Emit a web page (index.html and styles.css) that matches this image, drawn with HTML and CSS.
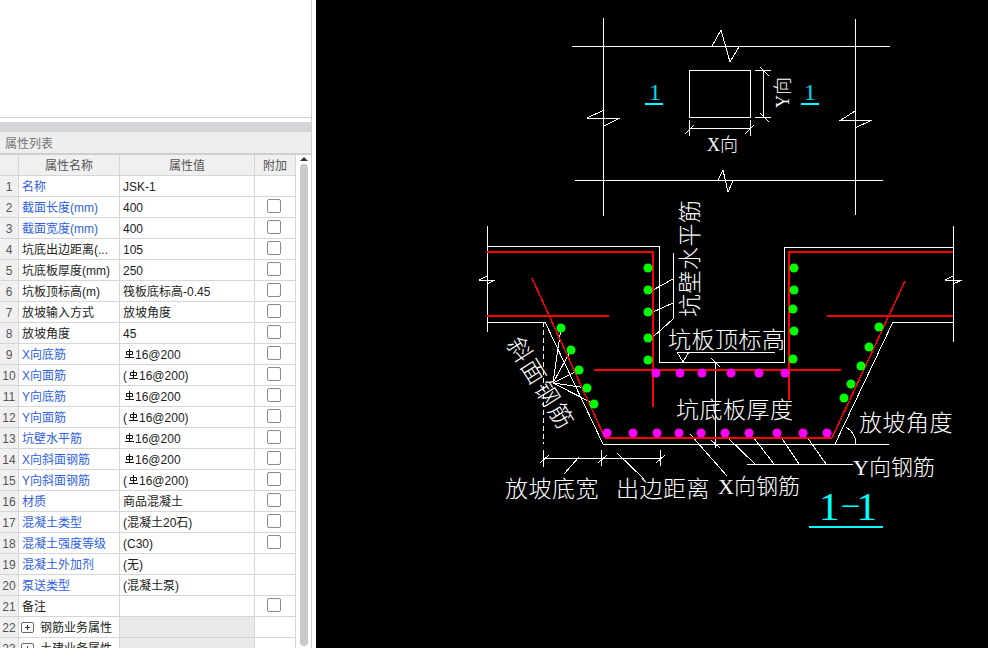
FILE: index.html
```html
<!DOCTYPE html>
<html lang="zh-CN">
<head>
<meta charset="utf-8">
<title>属性列表</title>
<link rel="stylesheet" href="styles.css">
</head>
<body>
<svg class="defs" width="0" height="0" aria-hidden="true"><symbol id="rebar" viewBox="0 0 9 10"><path d="M4.5 0V8.5M1.5 2.5H7.5V5.5H1.5ZM0 8.5H9"/></symbol></svg>
<div class="app">
  <aside class="side">
    <div class="top-pane"></div>
    <div class="band"></div>
    <div class="title">属性列表</div>
    <div class="grid-wrap">
      <table class="props">
        <colgroup><col class="c-no"><col class="c-name"><col class="c-val"><col class="c-add"></colgroup>
        <thead><tr><th></th><th>属性名称</th><th>属性值</th><th>附加</th></tr></thead>
        <tbody>
          <tr><td class="no">1</td><td class="nm blue">名称</td><td>JSK-1</td><td class="add"></td></tr>
          <tr><td class="no">2</td><td class="nm blue">截面长度(mm)</td><td>400</td><td class="add"><span class="cb"></span></td></tr>
          <tr><td class="no">3</td><td class="nm blue">截面宽度(mm)</td><td>400</td><td class="add"><span class="cb"></span></td></tr>
          <tr><td class="no">4</td><td class="nm">坑底出边距离(...</td><td>105</td><td class="add"><span class="cb"></span></td></tr>
          <tr><td class="no">5</td><td class="nm">坑底板厚度(mm)</td><td>250</td><td class="add"><span class="cb"></span></td></tr>
          <tr><td class="no">6</td><td class="nm">坑板顶标高(m)</td><td>筏板底标高-0.45</td><td class="add"><span class="cb"></span></td></tr>
          <tr><td class="no">7</td><td class="nm">放坡输入方式</td><td>放坡角度</td><td class="add"><span class="cb"></span></td></tr>
          <tr><td class="no">8</td><td class="nm">放坡角度</td><td>45</td><td class="add"><span class="cb"></span></td></tr>
          <tr><td class="no">9</td><td class="nm blue">X向底筋</td><td><svg class="rb"><use href="#rebar"/></svg>16@200</td><td class="add"><span class="cb"></span></td></tr>
          <tr><td class="no">10</td><td class="nm blue">X向面筋</td><td>(<svg class="rb"><use href="#rebar"/></svg>16@200)</td><td class="add"><span class="cb"></span></td></tr>
          <tr><td class="no">11</td><td class="nm blue">Y向底筋</td><td><svg class="rb"><use href="#rebar"/></svg>16@200</td><td class="add"><span class="cb"></span></td></tr>
          <tr><td class="no">12</td><td class="nm blue">Y向面筋</td><td>(<svg class="rb"><use href="#rebar"/></svg>16@200)</td><td class="add"><span class="cb"></span></td></tr>
          <tr><td class="no">13</td><td class="nm blue">坑壁水平筋</td><td><svg class="rb"><use href="#rebar"/></svg>16@200</td><td class="add"><span class="cb"></span></td></tr>
          <tr><td class="no">14</td><td class="nm blue">X向斜面钢筋</td><td><svg class="rb"><use href="#rebar"/></svg>16@200</td><td class="add"><span class="cb"></span></td></tr>
          <tr><td class="no">15</td><td class="nm blue">Y向斜面钢筋</td><td>(<svg class="rb"><use href="#rebar"/></svg>16@200)</td><td class="add"><span class="cb"></span></td></tr>
          <tr><td class="no">16</td><td class="nm blue">材质</td><td>商品混凝土</td><td class="add"><span class="cb"></span></td></tr>
          <tr><td class="no">17</td><td class="nm blue">混凝土类型</td><td>(混凝土20石)</td><td class="add"><span class="cb"></span></td></tr>
          <tr><td class="no">18</td><td class="nm blue">混凝土强度等级</td><td>(C30)</td><td class="add"><span class="cb"></span></td></tr>
          <tr><td class="no">19</td><td class="nm blue">混凝土外加剂</td><td>(无)</td><td class="add"></td></tr>
          <tr><td class="no">20</td><td class="nm blue">泵送类型</td><td>(混凝土泵)</td><td class="add"></td></tr>
          <tr><td class="no">21</td><td class="nm">备注</td><td></td><td class="add"><span class="cb"></span></td></tr>
          <tr class="group"><td class="no">22</td><td class="nm"><span class="plus"></span>钢筋业务属性</td><td class="shade"></td><td class="add"></td></tr>
          <tr class="group"><td class="no">23</td><td class="nm"><span class="plus"></span>土建业务属性</td><td class="shade"></td><td class="add"></td></tr>
        </tbody>
      </table>
      <div class="scroll"><span class="arrow"></span><span class="thumb"></span></div>
    </div>
  </aside>
  <main class="canvas">
    <svg class="drawing" viewBox="316 0 672 648" width="672" height="648">
      <g class="wh">
        <!-- plan view -->
        <path d="M603 18V216M855 19V215M572 46H890M575 180H883"/>
        <path d="M712 46L721 30L730 62L739 47M718 180L723 170L728 192L733 181"/>
        <path d="M604 110L587 118H620L604 126M855 111L841 120H872L855 128"/>
        <path d="M689 70H750V117H689Z"/>
        <path d="M763 70V117M755 70H771M755 117H771M760 67L769 76M760 113L769 122"/>
        <path d="M689 128H750M689 120V136M750 120V136M685 134L694 125M745 134L754 125"/>
        <!-- section outline -->
        <path d="M487 226V332M953 226V342"/>
        <path d="M487 246H659V362H784V247H953"/>
        <path d="M487 322H545L603 444H889M835 444L893 322H953"/>
        <path d="M487 276L479 280H495L487 284M953 276L945 280H962L953 284"/>
        <!-- leaders -->
        <path d="M673 253V319L653 337M673 279L653 290M673 303L653 312"/>
        <path d="M677 352H775M677 352H689L683 362Z"/>
        <path d="M715 362V448M711 358L720 367M711 440L720 448"/>
        <path d="M553 383L561 328M553 383L571 350M553 383L579 370M553 383L587 388M553 383L594 404"/>
        <path class="dash" d="M543 322V444"/>
        <path d="M543 458H660M543 450V467M601 450V466M660 450V466M540 463L549 455M598 463L607 455M656 463L665 455"/>
        <path d="M579 457L564 474M617 453L644 479M690 434L727 476"/>
        <path d="M747 464H853M727 437L755 464M753 437L774 464M781 437L799 464M807 437L826 464"/>
        <path d="M846 427A21 21 0 0 1 856 444"/>
      </g>
      <g class="rd">
        <path d="M487 252H653V407M487 316H609M789 400V252H953M827 316H953M594 370H841M605 438H832"/>
        <path class="thin" d="M532 278L605 438M832 438L905 281"/>
      </g>
      <g class="gr">
        <circle cx="648" cy="268" r="4.5"/><circle cx="648" cy="290" r="4.5"/><circle cx="648" cy="312" r="4.5"/><circle cx="648" cy="338" r="4.5"/><circle cx="648" cy="360" r="4.5"/>
        <circle cx="794" cy="268" r="4.5"/><circle cx="794" cy="290" r="4.5"/><circle cx="793" cy="309" r="4.5"/><circle cx="794" cy="331" r="4.5"/><circle cx="793" cy="359" r="4.5"/>
        <circle cx="561" cy="328" r="4.5"/><circle cx="571" cy="350" r="4.5"/><circle cx="579" cy="370" r="4.5"/><circle cx="587" cy="388" r="4.5"/><circle cx="594" cy="404" r="4.5"/>
        <circle cx="879" cy="327" r="4.5"/><circle cx="869" cy="347" r="4.5"/><circle cx="861" cy="366" r="4.5"/><circle cx="851" cy="384" r="4.5"/><circle cx="844" cy="398" r="4.5"/>
      </g>
      <g class="mg">
        <circle cx="656" cy="373" r="4.5"/><circle cx="680" cy="373" r="4.5"/><circle cx="702" cy="373" r="4.5"/><circle cx="731" cy="373" r="4.5"/><circle cx="759" cy="373" r="4.5"/><circle cx="785" cy="373" r="4.5"/>
        <circle cx="607" cy="433" r="4.5"/><circle cx="633" cy="433" r="4.5"/><circle cx="657" cy="433" r="4.5"/><circle cx="679" cy="433" r="4.5"/><circle cx="701" cy="433" r="4.5"/><circle cx="725" cy="433" r="4.5"/><circle cx="749" cy="433" r="4.5"/><circle cx="777" cy="433" r="4.5"/><circle cx="803" cy="433" r="4.5"/><circle cx="827" cy="433" r="4.5"/>
      </g>
      <g class="cy">
        <path d="M645 104H663M801 104H819M809 527H883"/>
      </g>
      <g class="labels">
        <text class="t-s" x="707" y="151">X向</text>
        <text class="t-s" transform="translate(789 108) rotate(-90)">Y向</text>
        <text class="t-one" x="649" y="100">1</text>
        <text class="t-one" x="804" y="100">1</text>
        <text class="t-l" transform="translate(698 317) rotate(-90)">坑壁水平筋</text>
        <text class="t-l" x="668" y="348">坑板顶标高</text>
        <text class="t-l" x="676" y="418">坑底板厚度</text>
        <text class="t-l" x="859" y="431">放坡角度</text>
        <text class="t-m" x="853" y="475">Y向钢筋</text>
        <text class="t-m" x="718" y="494">X向钢筋</text>
        <text class="t-l" x="505" y="497">放坡底宽</text>
        <text class="t-l" x="616" y="497">出边距离</text>
        <text class="t-sp" transform="translate(506 344) rotate(58)">斜面钢筋</text>
        <text class="t-big" x="819" y="520">1<tspan class="t-dash" dx="3" dy="-6">–</tspan><tspan dy="6" dx="-2">1</tspan></text>
      </g>
    </svg>
  </main>
</div>
</body>
</html>
```
FILE: styles.css
```css
* { box-sizing: border-box; }
html, body { margin: 0; padding: 0; height: 100%; background: #fff; overflow: hidden; }
body { font: 12px/20px "Liberation Sans", "Noto Sans CJK SC", sans-serif; color: #1c1c1c; }
.defs { position: absolute; }
.app { display: flex; width: 988px; height: 648px; }

.side {
  width: 312px;
  height: 648px;
  margin-right: 4px;
  border-right: 1px solid #cfcfcf;
  display: flex;
  flex-direction: column;
  overflow: hidden;
  flex: none;
}
.top-pane { height: 118px; border-bottom: 1px solid #cfcfcf; flex: none; }
.band { height: 10px; margin-top: 4px; background: #d3d5d9; flex: none; }
.title {
  height: 23px;
  padding: 2px 0 0 5px;
  background: #eeeeee;
  border-bottom: 2px solid #cfcfcf;
  color: #757575;
  flex: none;
}
.grid-wrap { display: flex; flex: 1; min-height: 0; }

.props {
  width: 296px;
  table-layout: fixed;
  border-collapse: separate;
  border-spacing: 0;
  flex: none;
  align-self: flex-start;
}
.c-no { width: 19px; }
.c-name { width: 101px; }
.c-val { width: 135px; }
.c-add { width: 41px; }
.props th, .props td {
  height: 21px;
  padding: 2px 0 0 3px;
  border-right: 1px solid #d6d6d6;
  border-bottom: 1px solid #d6d6d6;
  white-space: nowrap;
  overflow: hidden;
  text-align: left;
  font-weight: 400;
  line-height: 18px;
}
.props th { background: #f0f0f0; text-align: center; color: #555; padding: 2px 0 0; }
.props td.no { background: #f0f0f0; text-align: center; color: #555; padding: 2px 0 0; }
.props td.nm { color: #1c1c1c; }
.props td.blue { color: #2f5fe0; }
.props td.shade { background: #e9e9e9; }
.props td.add { padding: 0 0 0 3px; }
.cb {
  display: block;
  width: 14px;
  height: 14px;
  margin: 0 0 3px 9px;
  border: 1px solid #8a8a8a;
  border-radius: 2px;
}
.plus {
  display: inline-block;
  position: relative;
  width: 13px;
  height: 11px;
  margin: 0 6px 0 -1px;
  vertical-align: -1px;
  border: 1px solid #666;
  border-radius: 2px;
}
.plus::before, .plus::after { content: ""; position: absolute; background: #333; }
.plus::before { left: 3px; top: 4px; width: 5px; height: 1px; }
.plus::after { left: 5px; top: 2px; width: 1px; height: 5px; }
.rb {
  display: inline-block;
  width: 9px;
  height: 10px;
  margin: 0 1px 0 2px;
  vertical-align: 0;
  fill: none;
  stroke: #111;
  stroke-width: 1;
}

.scroll { flex: 1; position: relative; }
.arrow {
  position: absolute;
  left: 4px;
  top: 2px;
  border-left: 4px solid transparent;
  border-right: 4px solid transparent;
  border-bottom: 4px solid #333;
}
.thumb {
  position: absolute;
  left: 4px;
  top: 9px;
  width: 8px;
  height: 482px;
  background: #c9c9c9;
  border-radius: 4px;
}

.canvas { flex: 1; background: #000; height: 648px; overflow: hidden; }
.drawing { display: block; }
.wh path { fill: none; stroke: #fff; stroke-width: 1; shape-rendering: crispEdges; }
.wh .dash { stroke-dasharray: 5 3; }
.rd path { fill: none; stroke: #f00; stroke-width: 2; shape-rendering: crispEdges; }
.rd .thin { stroke-width: 1.5; }
.cy path { fill: none; stroke: #0ff; stroke-width: 2; shape-rendering: crispEdges; }
.gr circle { fill: #0f0; }
.mg circle { fill: #f0f; }
.labels text { fill: #fff; font-family: "Liberation Serif", "Noto Sans CJK SC", serif; font-weight: 300; }
.t-s { font-size: 18px; }
.t-l { font-size: 23px; letter-spacing: 0.5px; }
.t-m { font-size: 22px; }
.t-sp { font-size: 24px; letter-spacing: 2px; }
.labels .t-one { font-size: 24px; fill: #00d8ee; }
.labels .t-big { font-size: 41px; fill: #0ff; }
.labels .t-dash { font-size: 32px; }
```
